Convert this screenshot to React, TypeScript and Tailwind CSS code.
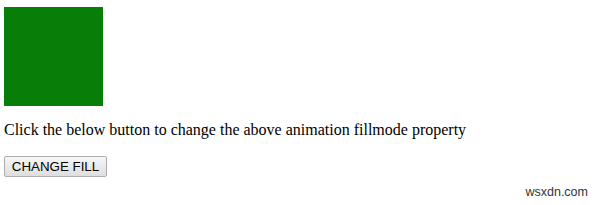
import React from 'react'

export default function App() {
  return (
    <div className="relative h-[205px] w-[600px] bg-white pl-1 pt-[7px] font-['Liberation_Serif',serif] text-black">
      <div className="h-[99px] w-[99px] bg-[#077e07]" />
      <p className="mt-[15px] text-base leading-[18px]">
        Click the below button to change the above animation fillmode property
      </p>
      <button className="mt-[17px] h-[21px] w-[103px] whitespace-nowrap rounded-[2px] border border-[#adadad] bg-gradient-to-b from-[#f6f6f6] to-[#dedede] px-0 font-['Liberation_Sans',Arial,sans-serif] text-[13.33px] leading-none text-black">
        CHANGE FILL
      </button>
      <span className="absolute right-[12px] top-[184px] font-['Liberation_Sans',Arial,sans-serif] text-[12.5px] leading-4 text-[#333]">
        wsxdn.com
      </span>
    </div>
  )
}
